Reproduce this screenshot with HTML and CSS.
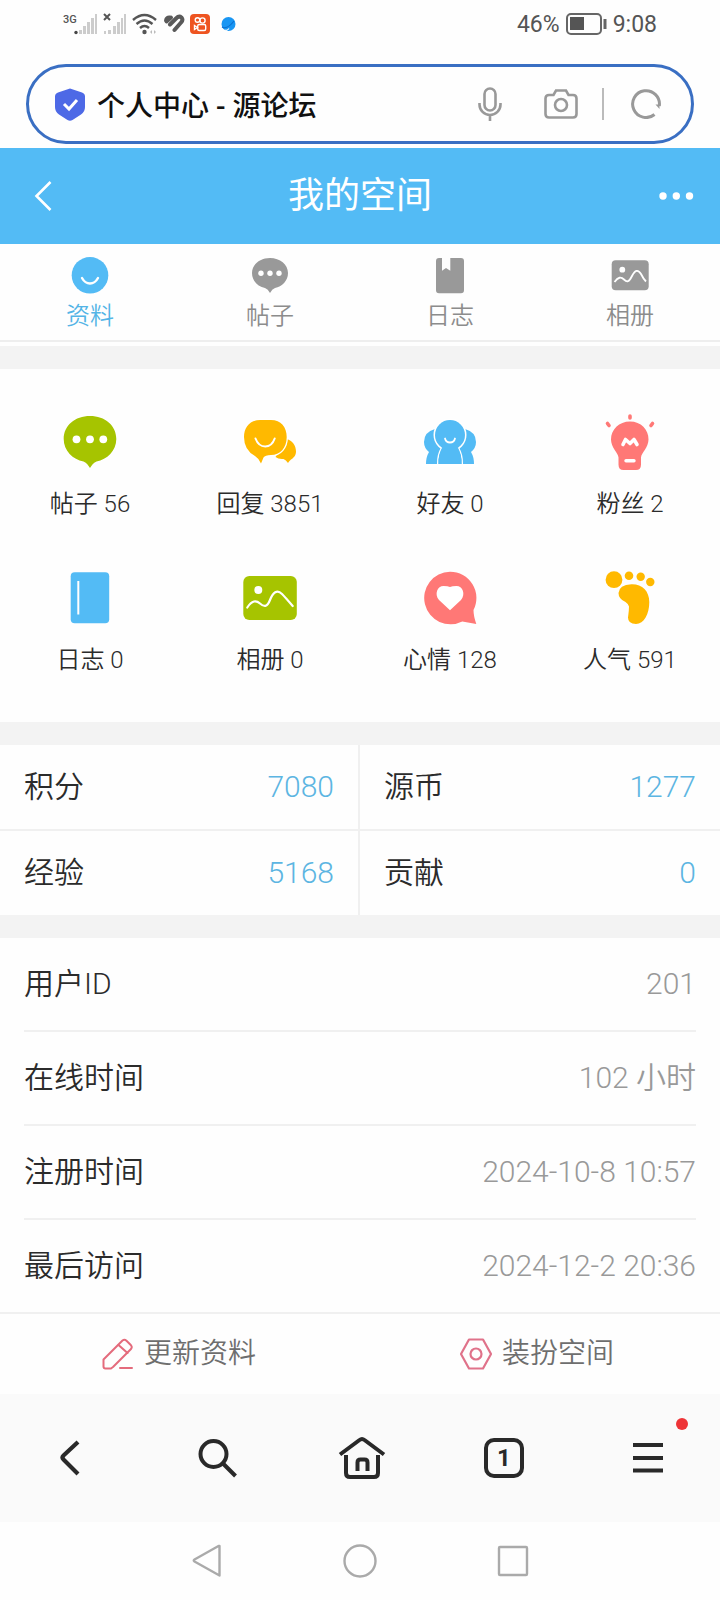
FILE: index.html
```html
<!DOCTYPE html>
<html lang="zh-CN">
<head>
<meta charset="utf-8">
<meta name="viewport" content="width=device-width, initial-scale=1">
<title>个人中心 - 源论坛</title>
<link rel="stylesheet" href="styles.css">
</head>
<body>
<div class="status">
  <div class="status-icons">
    <svg width="36" height="24" viewBox="0 0 36 24"><text class="net" x="1" y="11">3G</text><g fill="#ccc"><rect x="17" y="18" width="3" height="4"/><rect x="21" y="14" width="3" height="8"/><rect x="25" y="10" width="3" height="12"/><rect x="29" y="6" width="3" height="16"/><rect x="33" y="2" width="2" height="20"/></g><circle cx="14" cy="20.500" r="1.700" fill="#444"/></svg>
    <svg width="24" height="24" viewBox="0 0 24 24"><path d="M1 2l6 6M7 2L1 8" stroke="#555" stroke-width="2"/><g fill="#ccc"><rect x="1" y="19" width="2" height="3"/><rect x="5" y="18" width="3" height="4"/><rect x="10" y="14" width="3" height="8"/><rect x="14" y="10" width="3" height="12"/><rect x="18" y="6" width="2" height="16"/><rect x="21" y="2" width="2" height="20"/></g></svg>
    <svg width="26" height="24" viewBox="0 0 26 24"><g fill="none" stroke="#555" stroke-width="2.400"><path d="M1 8Q12.500-2 24 8"/><path d="M4.500 12Q12.500 5 20.500 12"/><path d="M8 16q4.500-4 9 0"/></g><circle cx="12.500" cy="20" r="2.200" fill="#555"/><path d="M18 20l2-2v4zM24 20l-2-2v4z" fill="#bbb"/></svg>
    <svg width="22" height="24" viewBox="0 0 22 24"><g fill="none" stroke="#5a5a5a" stroke-linecap="round" stroke-width="4"><path d="M3 8.500Q3.500 5 7 5.500M3.500 9.500L8 5.500"/><path d="M7 12.500L13 6.500Q16 3.500 18.500 5.500 20.500 8 18 10.500L11.500 18"/><path d="M13.500 10.500L9.500 15" stroke="#fefefe" stroke-width="1"/></g></svg>
    <svg width="20" height="20" viewBox="0 0 20 20"><rect width="20" height="20" rx="4" fill="#ee5420"/><g fill="none" stroke="#fff" stroke-width="1.400"><circle cx="7.500" cy="6" r="2.300"/><circle cx="12.500" cy="6.500" r="2.600"/><rect x="7.700" y="10.500" width="8" height="6" rx="1.500"/><path d="M7.500 13.500L4.500 11.500v4z"/></g></svg>
    <svg class="i-globe" width="15" height="16" viewBox="0 0 15 16"><circle cx="7.500" cy="8" r="7" fill="#1996f3"/><path d="M1 11Q6 14 13 5" fill="none" stroke="#0b70d0" stroke-width="1.200"/><path d="M4 14Q6 15 8 12.500" fill="none" stroke="#fff" stroke-width="1.200"/></svg>
  </div>
  <div class="status-right">
    <span>46%</span>
    <svg width="41" height="22" viewBox="0 0 41 22"><rect x="1" y="1" width="34" height="20" rx="4" fill="none" stroke="#666" stroke-width="2"/><rect x="4" y="4" width="14" height="13" fill="#555"/><path d="M39 6v10" stroke="#666" stroke-width="3"/></svg>
    <span>9:08</span>
  </div>
</div>

<form class="search">
  <svg width="30" height="33" viewBox="0 0 30 33"><path d="M15 .5L27 4.500Q30 5.500 30 8.500V19Q30 24 26 26.500L17.500 32Q15 33.500 12.500 32L4 26.500Q0 24 0 19V8.500Q0 5.500 3 4.500z" fill="#4d69e6"/><path d="M9 16l5 5 8-9" fill="none" stroke="#fff" stroke-width="3"/></svg>
  <input class="search-text" type="text" value="个人中心 - 源论坛" aria-label="地址">
  <button type="button" class="bare" aria-label="语音"><svg width="24" height="34" viewBox="0 0 24 34"><g fill="none" stroke="#999" stroke-width="2.600"><rect x="6.500" y="1.500" width="11" height="22" rx="5.500"/><path d="M1.500 16v1.500a10.500 10.500 0 0 0 21 0V16M12 28v6"/></g></svg></button>
  <button type="button" class="bare camera" aria-label="拍照"><svg width="34" height="30" viewBox="0 0 34 30"><g fill="none" stroke="#999" stroke-width="2.600"><path d="M5 6h4.500l2.500-4.500h10L24.500 6H29q3.500 0 3.500 3.500V25q0 3.500-3.500 3.500H5Q1.500 28.500 1.500 25V9.500Q1.500 6 5 6z"/><circle cx="17" cy="16" r="6"/></g></svg></button>
  <span class="divider"></span>
  <button type="button" class="bare" aria-label="刷新"><svg width="30" height="30" viewBox="0 0 30 30"><path d="M23.500 25.500A13.400 13.400 0 1 1 28.300 17" fill="none" stroke="#999" stroke-width="3"/><path d="M24.500 15.500h4v4.500z" fill="#999"/></svg></button>
</form>

<header class="header">
  <button type="button" class="bare header-btn" aria-label="返回"><svg width="20" height="32" viewBox="0 0 20 32"><path d="M16.500 2L2.500 16l14 14" fill="none" stroke="#fff" stroke-width="2.600"/></svg></button>
  <h1 class="title">我的空间</h1>
  <button type="button" class="bare header-btn" aria-label="更多"><svg width="36" height="10" viewBox="0 0 36 10"><g fill="#fff"><circle cx="5" cy="5" r="3.700"/><circle cx="18.300" cy="5" r="3.700"/><circle cx="31.500" cy="5" r="3.700"/></g></svg></button>
</header>

<nav class="tabs">
  <a href="#" class="tab tab-on"><svg width="40" height="40" viewBox="0 0 40 40"><circle cx="20" cy="20.300" r="18.300" fill="#53bbf5"/><path d="M12 23q3 5.500 8 5.500t8-5.500" fill="none" stroke="#fff" stroke-width="2.400" stroke-linecap="round"/></svg>资料</a>
  <a href="#" class="tab"><svg width="40" height="40" viewBox="0 0 40 40"><path d="M20 3C30 3 38 9.500 38 18c0 8-6 13.500-13 15q-3 1-5 5-2-4-5-5C8 31.500 2 26 2 18 2 9.500 10 3 20 3z" fill="#999"/><g fill="#fff"><circle cx="11" cy="18.300" r="2.700"/><circle cx="20" cy="18.300" r="2.700"/><circle cx="29" cy="18.300" r="2.700"/></g></svg>帖子</a>
  <a href="#" class="tab"><svg width="40" height="40" viewBox="0 0 40 40"><path d="M9 3h3v12.700L16 13l4.300 2.700V3H31q3 0 3 3v29.300q0 3-3 3H9q-3 0-3-3V6q0-3 3-3z" fill="#999"/></svg>日志</a>
  <a href="#" class="tab"><svg width="40" height="40" viewBox="0 0 40 40"><rect x="1.700" y="5.300" width="37" height="30" rx="4" fill="#999"/><circle cx="12.300" cy="14.700" r="2.900" fill="#fff"/><path d="M4.500 27C8 22 11 21.500 14 24.500S19 27 22 21s6-7 9-2q2.500 5 5 7.500" fill="none" stroke="#fff" stroke-width="1.800"/></svg>相册</a>
</nav>
<div class="strip"></div>

<section class="stats">
  <a href="#" class="stat"><svg width="64" height="64" viewBox="0 0 64 64"><path d="M32 6C47 6 58.300 15.500 58.300 29 58.300 41 49 49.500 38.500 51.500 35 53 34 55 32 58 30 55 29 53 25.500 51.500 15 49.500 5.700 41 5.700 29 5.700 15.500 17 6 32 6z" fill="#a6c400"/><g fill="#fff"><circle cx="18.500" cy="29.300" r="3.900"/><circle cx="32" cy="29.300" r="3.900"/><circle cx="45.300" cy="29.300" r="3.900"/></g></svg><span>帖子 <span class="num">56</span></span></a>
  <a href="#" class="stat"><svg width="64" height="64" viewBox="0 0 64 64"><path d="M48 29c6 1 10 6 10 12.500 0 4-2.500 6.500-5 8q-2 1.500-3 3.500-2-3-4.500-4-5 .5-8-2z" fill="#ffb900"/><path d="M22 10h11C43 10 48.700 17 48.700 27 48.700 38 42 45 33 45q-6 0-7.500 2.500L23 53.500q-2-5-6-7.500Q6 40 6 27C6 17 12 10 22 10z" fill="#ffb900" stroke="#fff" stroke-width="2.600" paint-order="stroke"/><path d="M17.500 28.500q3 8 9.700 8t9.500-8" fill="none" stroke="#fff" stroke-width="2" stroke-linecap="round"/></svg><span>回复 <span class="num">3851</span></span></a>
  <a href="#" class="stat"><svg width="64" height="64" viewBox="0 0 64 64"><g fill="#53bbf5"><path d="M17 19Q6 22 6 32q0 6 5 10-3 5-3 12h48q0-7-3-12 5-4 5-10 0-10-11-13z"/><g stroke="#fff" stroke-width="3" paint-order="stroke"><path d="M25 37q-5 8-4.500 17h23Q44 45 39 37z"/><circle cx="32" cy="25" r="15"/></g><path d="M25 36q-5 8-4.500 18h23Q44 44 39 36z"/></g><path d="M27 28.500q1 4 5 4t5-4" fill="none" stroke="#fff" stroke-width="1.800" stroke-linecap="round"/><path d="M4 55.500h56" stroke="#fff" stroke-width="3"/></svg><span>好友 <span class="num">0</span></span></a>
  <a href="#" class="stat"><svg width="64" height="64" viewBox="0 0 64 64"><path d="M32 11.500c11 0 18.500 8 18.500 18 0 8-7 13-7.500 18v7q0 5.500-5 5.500H25.500q-5 0-5-5.500v-7c-.5-5-7.500-10-7.500-18 0-10 8-18 19-18z" fill="#ff7876"/><g fill="none" stroke-linecap="round"><path d="M32 6v2M9.500 13.500l1.500 2M54.500 13.500l-1.500 2" stroke="#ff7876" stroke-width="3.600"/><path d="M25 34.500l2.500-5 4.500 4 4-4 3 5" stroke="#fff" stroke-width="3.600" stroke-linejoin="round"/><path d="M28 50.700h8" stroke="#fff" stroke-width="3.400"/></g></svg><span>粉丝 <span class="num">2</span></span></a>
  <a href="#" class="stat"><svg width="64" height="64" viewBox="0 0 64 64"><rect x="12.700" y="6.300" width="38.500" height="51" rx="4" fill="#53bbf5"/><path d="M20.300 15v33.500" stroke="#fff" stroke-width="2"/></svg><span>日志 <span class="num">0</span></span></a>
  <a href="#" class="stat"><svg width="64" height="64" viewBox="0 0 64 64"><rect x="5.300" y="10" width="53.500" height="44" rx="6" fill="#a6c400"/><circle cx="20.300" cy="24" r="4" fill="#fff"/><path d="M9.300 41.500C14 34.500 18 34 22 37.500S29 41.500 32 34s7-11 12-6q3 3 10.700 12" fill="none" stroke="#fff" stroke-width="2.200" stroke-linecap="round"/></svg><span>相册 <span class="num">0</span></span></a>
  <a href="#" class="stat"><svg width="64" height="64" viewBox="0 0 64 64"><path d="M32 5.700A26.300 26.300 0 0 1 55.500 44q0 6 2.800 14l-14-2.500A26.300 26.300 0 1 1 32 5.700z" fill="#ff7876"/><path d="M32 44.300L21 34c-5-6-1.500-14 4.500-14q4.500 0 6.500 1 2-1 6.500-1c6 0 9.500 8 4.500 14z" fill="#fff"/></svg><span>心情 <span class="num">128</span></span></a>
  <a href="#" class="stat"><svg width="64" height="64" viewBox="0 0 64 64"><g fill="#ffb900"><circle cx="16" cy="13.700" r="8.400"/><circle cx="31" cy="9.700" r="4.300"/><circle cx="42.700" cy="10.700" r="4.200"/><circle cx="52.300" cy="16" r="4.200"/><path d="M33.500 18.300C44 18 51.300 25 51.300 36 51.300 48 46 58 38 58q-8 0-8-6.500 1-7 1-11-.500-2.500-3.500-4.500-7-3-7-9Q21 19 33.500 18.300z"/></g></svg><span>人气 <span class="num">591</span></span></a>
</section>
<div class="strip"></div>

<dl class="credits">
  <div class="credit"><dt>积分</dt><dd class="num">7080</dd></div>
  <div class="credit"><dt>源币</dt><dd class="num">1277</dd></div>
  <div class="credit"><dt>经验</dt><dd class="num">5168</dd></div>
  <div class="credit"><dt>贡献</dt><dd class="num">0</dd></div>
</dl>
<div class="strip"></div>

<dl class="info">
  <div class="row"><dt>用户<span class="num">ID</span></dt><dd class="num">201</dd></div>
  <div class="row"><dt>在线时间</dt><dd><span class="num">102</span> 小时</dd></div>
  <div class="row"><dt>注册时间</dt><dd class="num">2024-10-8 10:57</dd></div>
  <div class="row"><dt>最后访问</dt><dd class="num">2024-12-2 20:36</dd></div>
</dl>

<div class="actions">
  <a href="#" class="action"><svg width="32" height="32" viewBox="0 0 32 32"><g fill="none" stroke="#e46b7c" stroke-width="2" stroke-linejoin="round" stroke-linecap="round"><path d="M1.500 21.500L20.500 2.500q2-1.500 4 .3l4.500 4.500q1.500 1.700 0 3.700L11 29l-2 1.500H3.500q-2 0-2-2z"/><path d="M16.500 7l9 8M18 30h12"/></g></svg>更新资料</a>
  <a href="#" class="action"><svg width="32" height="32" viewBox="0 0 32 32"><g fill="none" stroke="#e0728a" stroke-width="2.200" stroke-linejoin="round"><path d="M9 1.500h14L31 16l-8 14.500H9L1 16z"/><circle cx="16" cy="16" r="5.500"/></g></svg>装扮空间</a>
</div>

<nav class="toolbar">
  <button type="button" class="bare" aria-label="后退"><svg width="44" height="44" viewBox="0 0 44 44"><path d="M28 6L13.500 19.500q-2 2 0 4L28 38" fill="none" stroke="#292929" stroke-width="4.200"/></svg></button>
  <button type="button" class="bare" aria-label="搜索"><svg width="44" height="44" viewBox="0 0 44 44"><g fill="none" stroke="#292929" stroke-width="4"><circle cx="19.500" cy="18" r="13"/><path d="M29 27.500L41.500 40"/></g></svg></button>
  <button type="button" class="bare" aria-label="主页"><svg width="52" height="44" viewBox="0 0 52 44"><g fill="none" stroke="#292929" stroke-width="4"><path d="M6 18.500L25.500 4q2.500-2 5 0L50 18.500"/><path d="M12 19v18q0 4 4 4h24q4 0 4-4V19M23.500 35v-8.500q0-3 3-3h4q3 0 3 3V35"/></g></svg></button>
  <button type="button" class="bare" aria-label="标签页"><span class="count">1</span></button>
  <button type="button" class="bare menu" aria-label="菜单"><svg width="44" height="44" viewBox="0 0 44 44"><path d="M7 9h30M7 22h30M7 34.500h30" stroke="#292929" stroke-width="4"/></svg><span class="dot"></span></button>
</nav>

<nav class="sysnav">
  <button type="button" class="bare" aria-label="返回"><svg width="34" height="34" viewBox="0 0 34 34"><path d="M29.500 2v29.500L4.500 17.500q-1.500-1 0-2L28.500 2z" fill="none" stroke="#aaa" stroke-width="2.400" stroke-linejoin="round"/></svg></button>
  <button type="button" class="bare" aria-label="桌面"><svg width="34" height="34" viewBox="0 0 34 34"><circle cx="17" cy="17" r="15.500" fill="none" stroke="#aaa" stroke-width="2.400"/></svg></button>
  <button type="button" class="bare" aria-label="最近任务"><svg width="34" height="34" viewBox="0 0 34 34"><rect x="3" y="3" width="28" height="28" rx="1" fill="none" stroke="#aaa" stroke-width="2.400"/></svg></button>
</nav>
</body>
</html>
```
FILE: styles.css
```css
* {
  box-sizing: border-box;
}

body {
  margin: 0;
  background: #fefefe;
  color: #2b2b2b;
  font-family: Roboto, "Noto Sans CJK SC", sans-serif;
  font-weight: 350;
}

a {
  color: inherit;
  text-decoration: none;
}

svg {
  display: block;
  flex: none;
}

dl,
dd {
  margin: 0;
}

.num {
  font-weight: 300;
}

.bare {
  display: flex;
  align-items: center;
  justify-content: center;
  padding: 0;
  border: 0;
  background: none;
  font: inherit;
}

.status {
  display: flex;
  align-items: center;
  justify-content: space-between;
  height: 64px;
  padding: 0 63px 16px 62px;
}

.status-icons {
  display: flex;
  align-items: center;
  gap: 5px;
}

.i-globe {
  margin-left: 6px;
}

.net {
  fill: #555;
  font-size: 11px;
  font-weight: 500;
}

.status-right {
  display: flex;
  align-items: center;
  gap: 6px;
  color: #555;
  font-size: 23px;
  font-weight: 400;
}

.search {
  display: flex;
  align-items: center;
  height: 80px;
  margin: 0 26px 4px;
  padding: 0 30px 0 26px;
  border: 3px solid #3a6fc3;
  border-radius: 40px;
}

.search-text {
  flex: 1;
  min-width: 0;
  padding: 0 0 0 12px;
  border: 0;
  outline: 0;
  background: none;
  color: #111;
  font-family: inherit;
  font-size: 28px;
  font-weight: 500;
}

.camera {
  margin-left: 42px;
}

.divider {
  width: 2px;
  height: 32px;
  margin: 0 27px 0 24px;
  background: #bbb;
}

.header {
  display: flex;
  align-items: center;
  justify-content: space-between;
  height: 96px;
  padding: 0 26px;
  background: #53bbf5;
  color: #fff;
}

.header-btn {
  width: 36px;
  height: 48px;
}

.title {
  margin: 0;
  font-size: 36px;
  font-weight: 400;
  line-height: 48px;
}

.tabs {
  display: grid;
  grid-template-columns: repeat(4, 1fr);
  margin-bottom: 4px;
  border-bottom: 2px solid #eee;
}

.tab {
  display: flex;
  flex-direction: column;
  align-items: center;
  gap: 5px;
  padding: 11px 0 8px;
  color: #8c8c8c;
  font-size: 24px;
  line-height: 32px;
}

.tab-on {
  color: #53b4e6;
}

.strip {
  height: 23px;
  background: #f3f3f3;
}

.stats {
  display: grid;
  grid-template-columns: repeat(4, 1fr);
  padding: 25px 0 16px;
}

.stat {
  display: flex;
  flex-direction: column;
  align-items: center;
  gap: 12px;
  height: 156px;
  padding-top: 16px;
  font-size: 24px;
  line-height: 36px;
}

.credits {
  display: grid;
  grid-template-columns: repeat(2, 1fr);
  font-size: 30px;
}

.credit {
  display: flex;
  justify-content: space-between;
  padding: 0 24px;
  line-height: 84px;
}

.credit:nth-child(odd) {
  border-right: 2px solid #f0f0f0;
}

.credit:nth-child(-n+2) {
  border-bottom: 2px solid #f0f0f0;
}

.credit dd {
  color: #5cb5e2;
}

.info {
  padding: 0 24px;
  font-size: 30px;
}

.row {
  display: flex;
  justify-content: space-between;
  border-bottom: 2px solid #f0f0f0;
  line-height: 92px;
}

.row:last-child {
  border-bottom: 0;
}

.row dd {
  color: #999;
}

.actions {
  display: grid;
  grid-template-columns: repeat(2, 1fr);
  padding-right: 4px;
  border-top: 2px solid #f0f0f0;
}

.action {
  display: flex;
  align-items: center;
  justify-content: center;
  gap: 10px;
  color: #6e6e6e;
  font-size: 28px;
  line-height: 80px;
}

.toolbar {
  display: grid;
  grid-template-columns: repeat(5, 1fr);
  height: 128px;
  background: #fafafa;
}

.count {
  width: 40px;
  height: 40px;
  border: 4px solid #292929;
  border-radius: 10px;
  color: #292929;
  font-family: Roboto, sans-serif;
  font-size: 24px;
  font-weight: 700;
  line-height: 32px;
}

.menu {
  position: relative;
}

.dot {
  position: absolute;
  top: 24px;
  right: 32px;
  width: 12px;
  height: 12px;
  border-radius: 50%;
  background: #ee3437;
}

.sysnav {
  display: grid;
  grid-template-columns: repeat(3, 1fr);
  height: 77px;
  padding: 0 130px;
}
```
